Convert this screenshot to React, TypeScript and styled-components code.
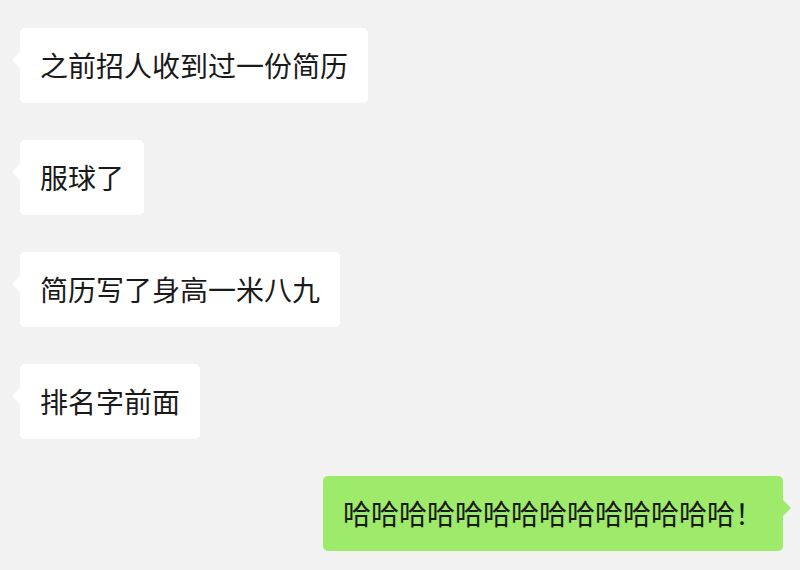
import React from "react";
import styled, { createGlobalStyle, css } from "styled-components";

const GlobalStyle = createGlobalStyle`
  html, body {
    margin: 0;
    padding: 0;
    background: #f2f2f2;
  }
`;

type Side = "left" | "right";

const messages: { text: string; side: Side }[] = [
  { text: "之前招人收到过一份简历", side: "left" },
  { text: "服球了", side: "left" },
  { text: "简历写了身高一米八九", side: "left" },
  { text: "排名字前面", side: "left" },
  { text: "哈哈哈哈哈哈哈哈哈哈哈哈哈哈！", side: "right" },
];

const App: React.FC = () => {
  return (
    <>
      <GlobalStyle />
      <ChatWindow>
        {messages.map((m, i) => (
          <Row key={i} side={m.side}>
            <Bubble side={m.side}>{m.text}</Bubble>
          </Row>
        ))}
      </ChatWindow>
    </>
  );
};

const ChatWindow = styled.div`
  width: 800px;
  height: 570px;
  box-sizing: border-box;
  padding: 28px 17px 0 20px;
  display: flex;
  flex-direction: column;
  gap: 37px;
  background: #f2f2f2;
  overflow: hidden;
`;

const Row = styled.div<{ side: Side }>`
  display: flex;
  justify-content: ${(p) => (p.side === "left" ? "flex-start" : "flex-end")};
`;

const Bubble = styled.div<{ side: Side }>`
  position: relative;
  padding: 0 20px;
  height: 75px;
  line-height: 75px;
  border-radius: 5px;
  font-family: "Noto Sans CJK SC", "Noto Sans", sans-serif;
  font-size: 28px;
  color: #1a1a1a;
  white-space: nowrap;
  background: ${(p) => (p.side === "left" ? "#ffffff" : "#9eea6a")};

  &::before {
    content: "";
    position: absolute;
    top: 24px;
    width: 0;
    height: 0;
    border-top: 8px solid transparent;
    border-bottom: 8px solid transparent;
    ${(p) =>
      p.side === "left"
        ? css`
            left: -8px;
            border-right: 8px solid #ffffff;
          `
        : css`
            right: -8px;
            border-left: 8px solid #9eea6a;
          `}
  }
`;

export default App;
